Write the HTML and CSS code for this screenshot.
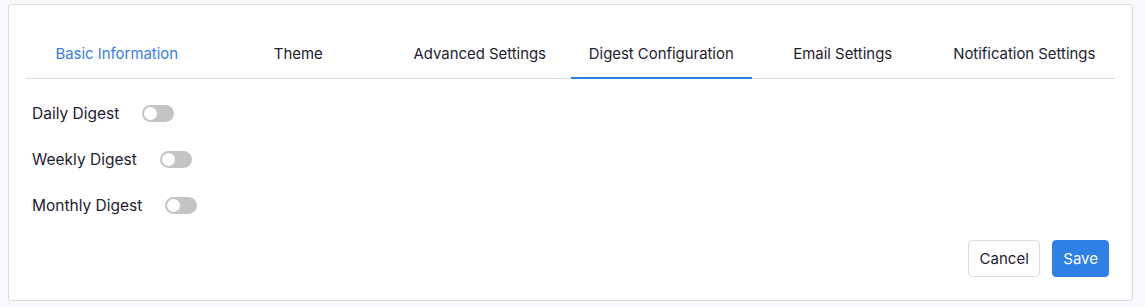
FILE: index.html
```html
<!DOCTYPE html>
<html>
<head>
<meta charset="utf-8">
<link rel="stylesheet" href="styles.css">
</head>
<body>
<div class="card">
  <nav class="tabs">
    <div class="tab tab-link">Basic Information</div>
    <div class="tab">Theme</div>
    <div class="tab">Advanced Settings</div>
    <div class="tab active">Digest Configuration</div>
    <div class="tab">Email Settings</div>
    <div class="tab">Notification Settings</div>
  </nav>
  <div class="rows">
    <div class="row"><span class="label">Daily Digest</span><span class="switch"><span class="knob"></span></span></div>
    <div class="row"><span class="label">Weekly Digest</span><span class="switch"><span class="knob"></span></span></div>
    <div class="row"><span class="label">Monthly Digest</span><span class="switch"><span class="knob"></span></span></div>
  </div>
  <div class="actions">
    <button class="btn btn-cancel">Cancel</button>
    <button class="btn btn-save">Save</button>
  </div>
</div>
</body>
</html>
```

FILE: styles.css
```css
* { box-sizing: border-box; }
html, body { margin: 0; padding: 0; }
body {
  background: #f8f9fc;
  font-family: Inter, "Noto Sans", sans-serif;
  color: #1e2230;
  padding: 4px 12px 0 8px;
}
.card {
  width: 1125px;
  height: 297px;
  background: #fff;
  border: 1px solid #dcdce8;
  border-radius: 3px;
  padding: 0 17px;
  display: flex;
  flex-direction: column;
}
.tabs {
  display: grid;
  grid-template-columns: repeat(6, 1fr);
  border-bottom: 1px solid #dcdce8;
  margin-top: 25px;
}
.tab {
  text-align: center;
  font-size: 14.9px;
  line-height: 20px;
  padding: 14px 0 13px;
  margin-bottom: -1px;
  border-bottom: 2px solid transparent;
  color: #1e2230;
}
.tab-link { color: #3b7ddd; }
.tab.active { border-bottom-color: #2f80e4; }
.rows {
  display: flex;
  flex-direction: column;
  gap: 26px;
  padding: 24px 6px 0;
}
.row {
  display: flex;
  align-items: center;
  height: 20px;
  font-size: 15.5px;
}
.switch {
  position: relative;
  width: 32px;
  height: 17px;
  border-radius: 9px;
  background: #c4c4c4;
  margin-left: 23px;
}
.knob {
  position: absolute;
  top: 2px;
  left: 2px;
  width: 13px;
  height: 13px;
  border-radius: 50%;
  background: #fff;
}
.actions {
  display: flex;
  justify-content: flex-end;
  gap: 12px;
  margin-top: 25px;
  padding-right: 6px;
}
.btn {
  font-family: inherit;
  font-size: 15px;
  height: 37px;
  border-radius: 4px;
  padding: 0 10px;
  cursor: pointer;
}
.btn-cancel {
  background: #fff;
  border: 1px solid #dcdce8;
  color: #1e2230;
  padding: 0 10.5px;
}
.btn-save {
  background: #2f80e4;
  border: 1px solid #2f80e4;
  color: #fff;
}
```
